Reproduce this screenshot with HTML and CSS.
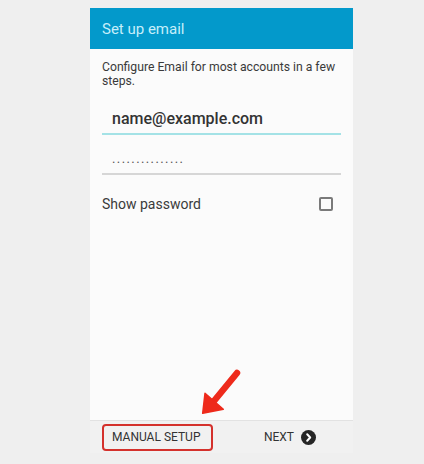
FILE: index.html
```html
<!DOCTYPE html>
<html lang="en">
<head>
<meta charset="utf-8">
<title>Set up email</title>
<link rel="stylesheet" href="styles.css">
</head>
<body>
<div class="phone">
  <header class="appbar">Set up email</header>
  <main class="content">
    <p class="intro">Configure Email for most accounts in a few steps.</p>
    <div class="field email">name@example.com</div>
    <div class="field password">...............</div>
    <div class="option-row">
      <span>Show password</span>
      <span class="checkbox"></span>
    </div>
  </main>
  <footer class="bottom-bar">
    <span class="btn manual">MANUAL SETUP</span>
    <span class="btn next">NEXT
      <svg class="next-icon" width="15" height="15" viewBox="0 0 15 15"><circle cx="7.5" cy="7.5" r="7.5" fill="#262626"/><path d="M6.2 4.3 L9.2 7.5 L6.2 10.7" fill="none" stroke="#fff" stroke-width="2" stroke-linecap="round" stroke-linejoin="round"/></svg>
    </span>
  </footer>
  <svg class="arrow" width="50" height="55" viewBox="0 0 50 55">
    <line x1="42" y1="8" x2="19" y2="36" stroke="#ee2a1b" stroke-width="6.5" stroke-linecap="round"/>
    <polygon points="7.7,48.3 10,28.3 28.3,44.3" fill="#ee2a1b" stroke="#ee2a1b" stroke-width="1.5" stroke-linejoin="round"/>
  </svg>
</div>
</body>
</html>
```

FILE: styles.css
```css
html, body {
  margin: 0;
  padding: 0;
}
body {
  background: #efefef;
  font-family: Roboto, "Liberation Sans", Arial, sans-serif;
  width: 424px;
  height: 464px;
  overflow: hidden;
}
.phone {
  position: relative;
  width: 263px;
  height: 445px;
  margin: 8px 0 0 90px;
  background: #fbfbfb;
  display: flex;
  flex-direction: column;
}
.appbar {
  height: 41px;
  flex: none;
  background: #0399cb;
  color: #c6eefa;
  font-size: 15px;
  display: flex;
  align-items: center;
  padding: 0 12px;
}
.content {
  flex: 1;
  padding: 11px 12px 0;
}
.intro {
  margin: 0;
  font-size: 12.2px;
  line-height: 14px;
  color: #3a3a3a;
}
.field {
  line-height: 18px;
  padding: 0 0 5px 10px;
  color: #333;
}
.email {
  margin-top: 22px;
  font-size: 16px;
  font-weight: 500;
  border-bottom: 2px solid #a4e2e6;
}
.password {
  padding-top: 15px;
  font-size: 13px;
  letter-spacing: 1.4px;
  color: #555;
  border-bottom: 2px solid #d6d6d6;
}
.option-row {
  margin-top: 20px;
  display: flex;
  align-items: center;
  justify-content: space-between;
  font-size: 14px;
  line-height: 18px;
  color: #3a3a3a;
}
.checkbox {
  width: 14px;
  height: 14px;
  box-sizing: border-box;
  border: 2px solid #7a7a7a;
  border-radius: 2px;
  margin-right: 8px;
}
.bottom-bar {
  height: 33px;
  flex: none;
  box-sizing: border-box;
  border-top: 1px solid #e2e2e2;
  background: #f1f1f1;
  display: flex;
  align-items: center;
  padding: 0 37px 0 12px;
}
.btn {
  font-size: 12px;
  color: #333;
  display: flex;
  align-items: center;
}
.manual {
  box-sizing: border-box;
  width: 111px;
  height: 27px;
  padding: 0 8px;
  border: 2px solid #d4312c;
  border-radius: 4px;
}
.next {
  margin-left: auto;
  gap: 7px;
}
.next-icon {
  display: block;
}
.arrow {
  position: absolute;
  left: 105px;
  top: 357px;
}
```
